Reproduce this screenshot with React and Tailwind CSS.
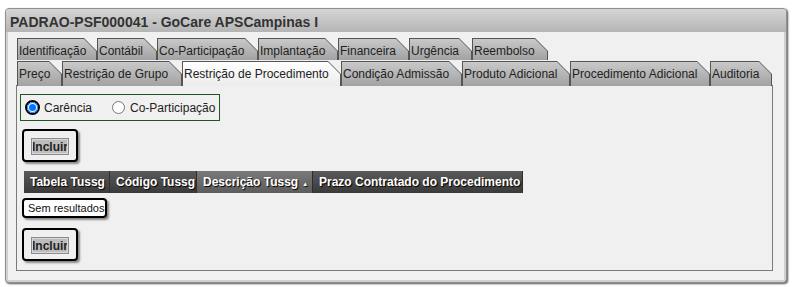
import React from "react";

const row1 = [
  { label: "Identificação", w: 80 },
  { label: "Contábil", w: 60 },
  { label: "Co-Participação", w: 101 },
  { label: "Implantação", w: 80 },
  { label: "Financeira", w: 71 },
  { label: "Urgência", w: 63 },
  { label: "Reembolso", w: 76 },
];

const row2 = [
  { label: "Preço", w: 45 },
  { label: "Restrição de Grupo", w: 120 },
  { label: "Restrição de Procedimento", w: 159, active: true },
  { label: "Condição Admissão", w: 121 },
  { label: "Produto Adicional", w: 108 },
  { label: "Procedimento Adicional", w: 140 },
  { label: "Auditoria", w: 62 },
];

const cols = [
  { label: "Tabela Tussg", w: 86 },
  { label: "Código Tussg", w: 87 },
  { label: "Descrição Tussg", w: 116, sorted: true },
  { label: "Prazo Contratado do Procedimento", w: 210 },
];

const Tab = ({ tab, h }) => (
  <div
    className="bg-[#555] pt-[1px] pl-[1px] pr-[1px] shrink-0 [clip-path:polygon(0_0,calc(100%_-_13px)_0,100%_13px,100%_100%,0_100%)]"
    style={{ width: tab.w, height: h }}
  >
    <div
      className={`h-full pl-[1px] pt-[5px] leading-[14px] text-[12px] text-[#222] whitespace-nowrap [clip-path:polygon(0_0,calc(100%_-_12px)_0,100%_12px,100%_100%,0_100%)] ${
        tab.active
          ? "bg-gradient-to-b from-[#ffffff] to-[#ececec]"
          : "bg-gradient-to-b from-[#c9c9c9] to-[#a2a2a2]"
      }`}
    >
      {tab.label}
    </div>
  </div>
);

const IncluirBox = () => (
  <div className="w-[56px] h-[33px] border-2 border-black rounded-[4px] bg-[#f0f0f0] p-[7px] shadow-[2px_2px_2px_#8a8a8a]">
    <button className="w-[38px] h-[17px] bg-[#bdbdbd] border border-[#8c8c8c] outline outline-1 -outline-offset-2 outline-[#d8d8d8] text-[12px] font-bold leading-[14px] text-[#222] flex items-center justify-center">
      Incluir
    </button>
  </div>
);

const Radio = ({ checked }) =>
  checked ? (
    <span className="block shrink-0 w-[15px] h-[15px] rounded-full border-2 border-black flex items-center justify-center bg-white">
      <span className="w-[11px] h-[11px] rounded-full border border-[#0075ff] flex items-center justify-center bg-white">
        <span className="block w-[7px] h-[7px] rounded-full bg-[#0075ff]" />
      </span>
    </span>
  ) : (
    <span className="block shrink-0 w-[13px] h-[13px] rounded-full border border-[#767676] bg-white" />
  );

export default function App() {
  return (
    <div
      className="w-[797px] h-[287px] bg-white pt-[8px] pl-[5px]"
      style={{ fontFamily: '"Liberation Sans", Arial, sans-serif' }}
    >
      <div className="w-[782px] h-[275px] border border-[#8f8f8f] rounded-[4px] shadow-[1px_1px_2px_#555] bg-[#d0d0d0] p-[2px] pt-0 flex flex-col">
        {/* title */}
        <div className="h-[23px] -mx-[2px] px-[4px] pt-[5px] rounded-t-[3px] bg-gradient-to-b from-[#d6d6d6] to-[#b4b4b4] text-[14px] leading-[16px] font-bold text-[#333]">
          PADRAO-PSF000041 - GoCare APSCampinas I
        </div>

        <div className="flex-1 bg-[#f0f0f0] pl-[8px] pr-[11px] pt-[6px]">
          {/* tabs */}
          <div className="flex ml-[1px]">
            {row1.map((t) => (
              <Tab key={t.label} tab={t} h={22} />
            ))}
          </div>
          <div className="flex ml-[1px] mt-[1px] relative z-10 -mb-px">
            {row2.map((t) => (
              <Tab key={t.label} tab={t} h={25} />
            ))}
          </div>

          {/* panel */}
          <div className="h-[186px] border border-[#7a7a7a] bg-[#f0f0f0] pl-[3px] pt-[8px]">
            <div className="w-[200px] h-[27px] border border-[#1e561e] flex items-center pl-[4px] text-[12px] text-[#222]">
              <Radio checked />
              <span className="ml-[4px]">Carência</span>
              <span className="ml-[20px] flex">
                <Radio />
              </span>
              <span className="ml-[5px]">Co-Participação</span>
            </div>

            <div className="ml-[2px] mt-[8px]">
              <IncluirBox />
            </div>

            <div className="ml-[4px] mt-[9px] flex h-[22px]">
              {cols.map((c) => (
                <div
                  key={c.label}
                  style={{ width: c.w }}
                  className={`shrink-0 flex items-center pl-[6px] text-[12px] font-bold text-white whitespace-nowrap border-r border-[#2e2e2e] [text-shadow:1px_1px_1px_#000] ${
                    c.sorted
                      ? "bg-gradient-to-b from-[#7a7a7a] to-[#5c5c5c]"
                      : "bg-gradient-to-b from-[#5a5a5a] to-[#3a3a3a]"
                  }`}
                >
                  {c.label}
                  {c.sorted && (
                    <span className="ml-[4px] text-[6px] leading-none mt-[3px]">▲</span>
                  )}
                </div>
              ))}
            </div>

            <div className="ml-[2px] mt-[5px] w-[85px] h-[20px] border-2 border-black rounded-[4px] bg-white shadow-[2px_2px_2px_#8a8a8a] pl-[4px] text-[11px] leading-[16px] text-[#111]">
              Sem resultados
            </div>

            <div className="ml-[2px] mt-[10px]">
              <IncluirBox />
            </div>
          </div>
        </div>
      </div>
    </div>
  );
}
